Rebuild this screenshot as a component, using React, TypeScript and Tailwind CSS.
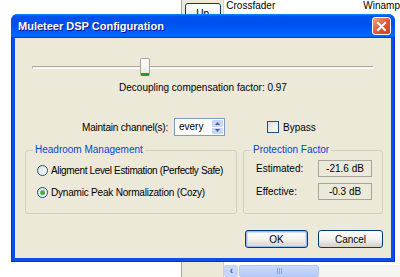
import React from "react";

const FONT = "font-['Liberation_Sans',Arial,sans-serif]";

function Radio({ checked }: { checked?: boolean }) {
  return (
    <div className="flex h-[11px] w-[11px] shrink-0 items-center justify-center rounded-full border border-[#1c5180] bg-gradient-to-br from-[#dcdcd7] to-white">
      {checked && (
        <div className="h-[5px] w-[5px] rounded-full bg-gradient-to-br from-[#5ed35e] to-[#1a9a1a]" />
      )}
    </div>
  );
}

function GroupBox({
  title,
  className,
  children,
}: {
  title: string;
  className: string;
  children: React.ReactNode;
}) {
  return (
    <div className={`relative rounded-[3px] border border-[#d0d0bf] ${className}`}>
      <span className="absolute -top-[7px] left-[7px] whitespace-nowrap bg-[#ece9d8] px-[2px] text-[10px] leading-[12px] text-[#0046d5]">
        {title}
      </span>
      {children}
    </div>
  );
}

function XpButton({ label, isDefault }: { label: string; isDefault?: boolean }) {
  return (
    <div
      className={`flex h-[18px] items-center justify-center rounded-[3px] border border-[#003c74] bg-gradient-to-b from-white via-[#f4f3ee] to-[#d6d0c5] text-[10px] text-black ${
        isDefault ? "shadow-[inset_0_0_0_1px_#97b8f5,inset_0_0_0_2px_#cedffa]" : ""
      }`}
    >
      {label}
    </div>
  );
}

function ValueBox({ value }: { value: string }) {
  return (
    <div className="flex h-[17px] w-[54px] items-center justify-center border border-[#a5a5a0] bg-[#ece9d8] text-[10px]">
      {value}
    </div>
  );
}

export default function App() {
  return (
    <div className={`relative h-[277px] w-[400px] overflow-hidden bg-white ${FONT}`}>
      {/* Window behind the dialog */}
      <div className="absolute bottom-0 left-[181px] right-0 top-0 flex border-l border-[#a7a6aa]">
        <div className="flex w-[49px] flex-col items-center bg-[#ece9d8] pt-[3px]">
          <div className="flex h-[20px] w-[36px] items-center justify-center rounded-[3px] border border-[#003c74] bg-gradient-to-b from-white to-[#e3e1d8] text-[10px]">
            Up
          </div>
        </div>
        <div className="flex flex-1 flex-col border-l border-[#d4d0c8] bg-white">
          <div className="flex h-[12px] items-center pl-[2px] text-[10px] leading-[12px]">
            <span className="w-[137px]">Crossfader</span>
            <span>Winamp</span>
          </div>
          <div className="flex-1" />
          <div className="flex h-[12px] bg-[#f4f4f0]">
            <div className="flex w-[14px] items-center justify-center rounded-[2px] border border-[#c3d3fd] bg-[#c8d8fc] text-[10px] font-bold leading-none text-[#4d6185]">
              ‹
            </div>
            <div className="ml-[1px] flex w-[80px] items-center justify-center rounded-[2px] border border-[#b4c8f6] bg-gradient-to-b from-[#cad9fd] to-[#b8cbf8]">
              <div className="flex gap-[1px]">
                <div className="h-[6px] w-[1px] bg-[#8aa4e0]" />
                <div className="h-[6px] w-[1px] bg-[#8aa4e0]" />
                <div className="h-[6px] w-[1px] bg-[#8aa4e0]" />
              </div>
            </div>
          </div>
        </div>
      </div>

      {/* Dialog window */}
      <div className="absolute left-[11px] top-[14px] flex h-[248px] w-[384px] flex-col rounded-t-[7px] bg-[#0a4fe6] shadow-[inset_0_0_0_1px_#0831d9]">
        <div className="flex h-[24px] items-center justify-between rounded-t-[7px] bg-[linear-gradient(180deg,#0997ff,#0053ee_8%,#0050ee_40%,#0066ff_88%,#0066ff_93%,#005bff_95%,#003dd7_96%,#003dd7)] pl-[7px] pr-[4px]">
          <span className="text-[11px] font-bold text-white [text-shadow:1px_1px_#0f1089]">
            Muleteer DSP Configuration
          </span>
          <div className="flex h-[18px] w-[19px] items-center justify-center rounded-[3px] border border-white bg-gradient-to-br from-[#f0a48a] via-[#e25a35] to-[#c8401e]">
            <svg width="11" height="11" viewBox="0 0 11 11">
              <path d="M2 2 L9 9 M9 2 L2 9" stroke="white" strokeWidth="2" strokeLinecap="square" />
            </svg>
          </div>
        </div>

        <div className="mx-[4px] mb-[4px] flex flex-1 flex-col bg-[#ece9d8] text-[10px] text-black">
          {/* Slider */}
          <div className="relative mx-[17px] mt-[20px] h-[18px]">
            <div className="absolute left-0 right-0 top-[8px] h-[3px] rounded-[2px] border border-t-[#a8a79f] border-b-white border-l-[#a8a79f] border-r-white bg-[#f3f3ef]" />
            <div className="absolute left-[108px] top-0 h-[18px] w-[10px] rounded-[2px] border border-[#a6a69a] border-b-[3px] border-b-[#21a121] bg-gradient-to-b from-white to-[#ecebe5]" />
          </div>

          <div className="mt-[6px] h-[12px] text-center leading-[12px]">
            Decoupling compensation factor: 0.97
          </div>

          {/* Maintain channels row */}
          <div className="mt-[24px] flex h-[18px] items-center pl-[67px]">
            <span className="w-[92px] whitespace-nowrap pr-[7px] text-right tracking-[-0.2px]">
              Maintain channel(s):
            </span>
            <div className="flex h-[18px] w-[51px] border border-[#7f9db9] bg-white">
              <span className="flex-1 pl-[4px] leading-[16px]">every</span>
              <div className="flex w-[13px] flex-col gap-[1px] p-[1px]">
                <div className="flex flex-1 items-center justify-center rounded-[1px] bg-[#c5d5fb]">
                  <svg width="5" height="3" viewBox="0 0 5 3">
                    <path d="M0 3 L2.5 0 L5 3 Z" fill="#4d6185" />
                  </svg>
                </div>
                <div className="flex flex-1 items-center justify-center rounded-[1px] bg-[#c5d5fb]">
                  <svg width="5" height="3" viewBox="0 0 5 3">
                    <path d="M0 0 L2.5 3 L5 0 Z" fill="#4d6185" />
                  </svg>
                </div>
              </div>
            </div>
            <div className="ml-[42px] h-[12px] w-[12px] border border-[#1c5180] bg-gradient-to-br from-[#dcdcd7] to-white" />
            <span className="ml-[4px]">Bypass</span>
          </div>

          {/* Group boxes */}
          <div className="mt-[14px] flex gap-[6px] pl-[10px]">
            <GroupBox title="Headroom Management" className="h-[64px] w-[212px]">
              <div className="flex flex-col pl-[11px] pt-[8px]">
                <div className="flex h-[22px] items-center gap-[3px] whitespace-nowrap">
                  <Radio />
                  <span className="tracking-[-0.35px]">Aligment Level Estimation (Perfectly Safe)</span>
                </div>
                <div className="flex h-[22px] items-center gap-[3px] whitespace-nowrap">
                  <Radio checked />
                  <span className="tracking-[-0.2px]">Dynamic Peak Normalization (Cozy)</span>
                </div>
              </div>
            </GroupBox>
            <GroupBox title="Protection Factor" className="h-[64px] w-[140px]">
              <div className="flex flex-col gap-[4px] pl-[12px] pt-[8px]">
                <div className="flex h-[19px] items-center">
                  <span className="w-[62px]">Estimated:</span>
                  <ValueBox value="-21.6 dB" />
                </div>
                <div className="flex h-[19px] items-center">
                  <span className="w-[62px]">Effective:</span>
                  <ValueBox value="-0.3 dB" />
                </div>
              </div>
            </GroupBox>
          </div>

          {/* Buttons */}
          <div className="mt-[16px] flex justify-end gap-[10px] pr-[8px]">
            <div className="w-[63px]">
              <XpButton label="OK" isDefault />
            </div>
            <div className="w-[65px]">
              <XpButton label="Cancel" />
            </div>
          </div>
        </div>
      </div>
    </div>
  );
}
